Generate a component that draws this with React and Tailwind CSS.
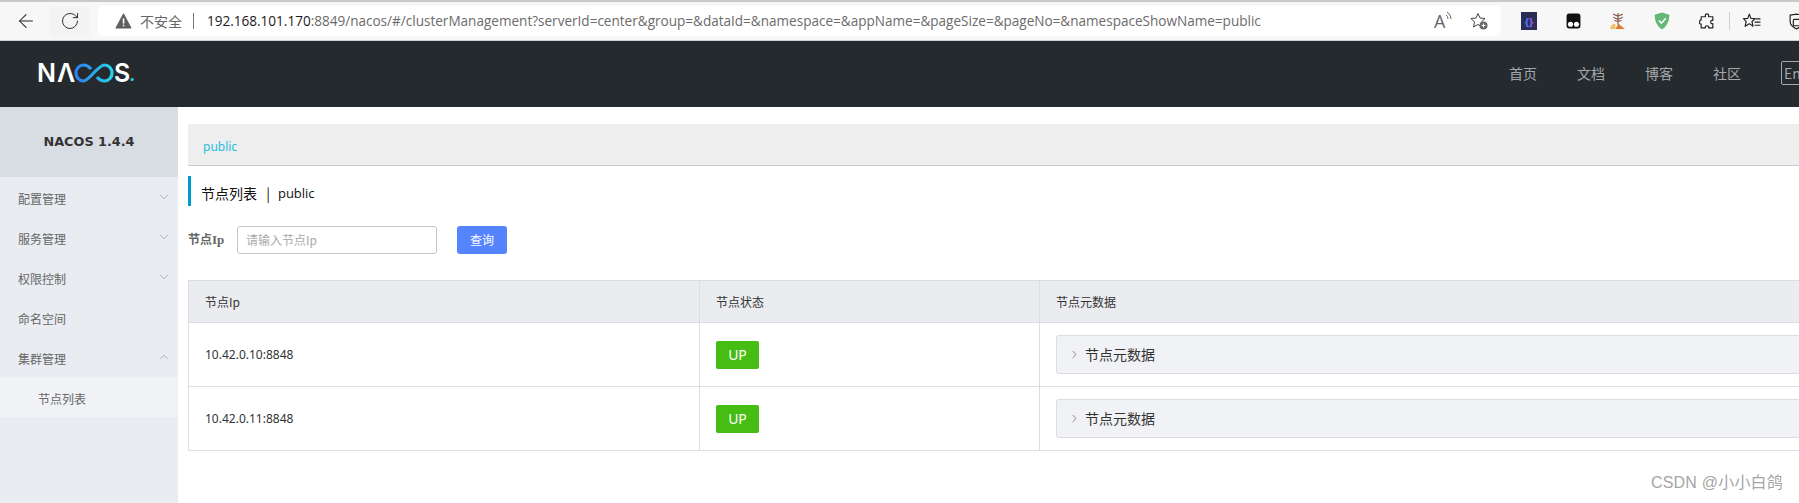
import React from "react";
import { ArrowLeft, RotateCw, ChevronDown, ChevronUp, ChevronRight } from "lucide-react";

const cjk = "font-['Noto_Sans_CJK_SC','Noto_Sans',sans-serif]";

function Logo() {
  return (
    <div className="flex items-center h-[20px] text-white font-['Inter',sans-serif] font-semibold text-[25px] leading-none">
      <span className="w-[20px]">N</span>
      <span className="w-[17px]">Λ</span>
      <svg width="40" height="20" viewBox="0 0 40 20" fill="none" strokeWidth="3.2">
        <defs>
          <linearGradient id="lg" x1="0" y1="0" x2="1" y2="0">
            <stop offset="0" stopColor="#2f7ff0" />
            <stop offset="1" stopColor="#27d3e8" />
          </linearGradient>
        </defs>
        <path d="M17 6 C14.500 3 12 2 9.500 2 C5 2 2 6 2 10 C2 14 5 18 9.500 18 C15 18 24 2 30.500 2 C35 2 38 6 38 10 C38 14 35 18 30.500 18 C27.500 18 25 16.500 23 14" stroke="url(#lg)" />
      </svg>
      <span className="w-[15px]">S</span>
      <span className="text-[#27c8e0] text-[20px] self-end leading-[18px]">.</span>
    </div>
  );
}

function Ext({ children }) {
  return <div className="w-[22px] h-[22px] flex items-center justify-center shrink-0">{children}</div>;
}

function Toolbar() {
  return (
    <div className="h-[41px] shrink-0 bg-[#f7f7f7] border-t-2 border-b border-t-[#c9c9c9] border-b-[#cfcfcf] flex items-center overflow-hidden font-['Open_Sans',sans-serif]">
      <div className="w-[50px] flex justify-center shrink-0 pl-[2px]">
        <ArrowLeft size={22} strokeWidth={1.1} color="#222" />
      </div>
      <div className="w-[40px] h-[30px] bg-[#f3f3f3] flex justify-center items-center shrink-0">
        <RotateCw size={20} strokeWidth={1.1} color="#222" />
      </div>
      <div className="ml-[8px] w-[1403px] h-[30px] bg-white rounded-[5px] flex items-center shrink-0">
        <svg width="17" height="16" viewBox="0 0 16 15" className="ml-[17px]">
          <path d="M8 1 L15 14 H1 Z" fill="#5f5f5f" stroke="#5f5f5f" strokeLinejoin="round" />
          <rect x="7.300" y="5" width="1.500" height="5" fill="#fff" />
          <rect x="7.300" y="11" width="1.500" height="1.500" fill="#fff" />
        </svg>
        <span className={`ml-[8px] text-[14px] text-[#666] ${cjk}`}>不安全</span>
        <span className="ml-[11px] w-px h-[16px] bg-[#777]" />
        <span className="ml-[13px] text-[13.55px] whitespace-nowrap text-[#6b6b6b] font-['Open_Sans',sans-serif]">
          <span className="text-[#1a1a1a]">192.168.101.170</span>:8849/nacos/#/clusterManagement?serverId=center&amp;group=&amp;dataId=&amp;namespace=&amp;appName=&amp;pageSize=&amp;pageNo=&amp;namespaceShowName=public
        </span>
        <div className="ml-auto flex items-center gap-[17px] pr-[13px]">
          <span className="flex items-start text-[#666] text-[18px] leading-none w-[19px] font-['Open_Sans',sans-serif]">
            A
            <svg width="7" height="10" viewBox="0 0 7 10" fill="none" stroke="#666" className="mt-[-1px]">
              <path d="M1 4 Q3 5 3 8 M2 1 Q6 3 6 8" />
            </svg>
          </span>
          <svg width="18" height="18" viewBox="0 0 18 18" fill="none">
            <path d="M8 1.500 L10 6 L15 6.500 L11.300 10 L12 15 L8 12.500 L3.500 15 L4.500 10 L1 6.500 L6 6 Z" stroke="#444" strokeLinejoin="round" />
            <circle cx="13.500" cy="13.500" r="4" fill="#666" />
            <path d="M11.500 13.500 H15.500 M13.500 11.500 V15.500" stroke="#fff" />
          </svg>
        </div>
      </div>
      <div className="ml-[17px] flex items-center gap-[22.4px] shrink-0">
        <Ext>
          <div className="w-[16px] h-[18px] bg-[#2b2d55] flex items-center justify-center text-[11px] leading-none font-bold">
            <span className="text-[#4f7dff]">{"{"}</span>
            <span className="text-[#9a5cf0]">{"}"}</span>
          </div>
        </Ext>
        <Ext>
          <svg width="15" height="16" viewBox="0 0 14 15">
            <path d="M3 0.500 H11 Q13.500 0.500 13.500 3 V12 Q13.500 14.500 11 14.500 H3 Q0.500 14.500 0.500 12 V3 Q0.500 0.500 3 0.500Z" fill="#111" />
            <circle cx="4.200" cy="10.500" r="2.400" fill="#fff" />
            <circle cx="9.800" cy="10.500" r="2.400" fill="#fff" />
          </svg>
        </Ext>
        <Ext>
          <svg width="16" height="18" viewBox="0 0 15 17">
            <path d="M0 16 Q1 11 5 11 L5 16 Z" fill="#edc060" />
            <path d="M5 16 L8 11 L14 16 Z" fill="#e07a30" />
            <path d="M7.500 12 V1 M7.500 4 L3 2 M7.500 4 L12 2 M7.500 7 L3 5 M7.500 7 L12 5 M7.500 9 L4 8 M7.500 9 L11 8" stroke="#8a5a50" strokeWidth="1.100" fill="none" />
          </svg>
        </Ext>
        <Ext>
          <svg width="16" height="18" viewBox="0 0 15 17">
            <path d="M7.500 0.500 L14.500 2.500 Q14.500 12 7.500 16.500 Q0.500 12 0.500 2.500 Z" fill="#63b777" />
            <path d="M4.500 8 L7 10.500 L11 6" stroke="#fff" strokeWidth="1.400" fill="none" />
          </svg>
        </Ext>
        <Ext>
          <svg width="16" height="17" viewBox="0 0 15 16" fill="none" stroke="#222" strokeWidth="1.100">
            <path d="M6 1.500 Q7.500 0 9 1.500 V3.500 H13 V7 Q11 6.500 11 8.500 Q11 10.500 13 10 V14 H9 Q9.500 12 7.500 12 Q5.500 12 6 14 H2 V10.500 Q0.200 10.500 0.500 8.500 Q0.500 6.500 2 6.500 V3.500 H6 Z" strokeLinejoin="round" />
          </svg>
        </Ext>
        <div className="w-px h-[18px] bg-[#d0d0d0] mx-[-11px]" />
        <Ext>
          <svg width="18" height="16" viewBox="0 0 17 15" fill="none" stroke="#222" strokeWidth="1.100">
            <path d="M6 1 L7.500 5 L11.500 5.300 L8.500 8 L9.500 12.500 L6 10 L2 12.500 L3 8 L0.500 5.300 L4.500 5 Z" strokeLinejoin="round" />
            <path d="M12 5.500 H16.500 M11 8.500 H16.500 M11 11.500 H16.500" />
          </svg>
        </Ext>
        <Ext>
          <svg width="17" height="17" viewBox="0 0 16 16" fill="none" stroke="#222" strokeWidth="1.100">
            <path d="M2 2 L8 1 L14 2 V8 Q14 12 8 15 Q2 12 2 8 Z" />
            <rect x="5" y="6" width="7" height="6" rx="1" />
          </svg>
        </Ext>
      </div>
    </div>
  );
}

function Header() {
  return (
    <div className={`h-[66px] shrink-0 bg-[#252a2f] flex items-center overflow-hidden ${cjk}`}>
      <div className="ml-[37px] mt-[-2px]"><Logo /></div>
      <div className="ml-auto flex items-center text-[14px] leading-none text-[#a5a8aa] gap-[40px] mr-[-22px] mt-[-2px]">
        <span className="w-[28px] whitespace-nowrap">首页</span>
        <span className="w-[28px] whitespace-nowrap">文档</span>
        <span className="w-[28px] whitespace-nowrap">博客</span>
        <span className="w-[28px] whitespace-nowrap">社区</span>
        <span className="w-[40px] h-[24px] border border-[#a5a8aa] rounded-[2px] pl-[2px] flex items-center">En</span>
      </div>
    </div>
  );
}

function MenuItem({ label, chevron, sub }) {
  return (
    <div className={`h-[40px] flex items-center justify-between ${sub ? "bg-[#f1f2f6] pl-[38px]" : "pl-[18px]"} pr-[7px] text-[12px] text-[#666]`}>
      <span className="mt-[3px]">{label}</span>
      {chevron === "down" && <ChevronDown size={14} strokeWidth={1} color="#7d828c" />}
      {chevron === "up" && <ChevronUp size={14} strokeWidth={1} color="#7d828c" />}
    </div>
  );
}

function Sidebar() {
  return (
    <div className={`w-[178px] shrink-0 bg-[#e9ecf1] ${cjk}`}>
      <div className="h-[70px] bg-[#d8dce3] flex items-center justify-center font-['DejaVu_Sans',sans-serif] font-bold text-[12.8px] text-[#333]">
        NACOS 1.4.4
      </div>
      <MenuItem label="配置管理" chevron="down" />
      <MenuItem label="服务管理" chevron="down" />
      <MenuItem label="权限控制" chevron="down" />
      <MenuItem label="命名空间" />
      <MenuItem label="集群管理" chevron="up" />
      <MenuItem label="节点列表" sub />
    </div>
  );
}

function Row({ ip, last, height }) {
  return (
    <div className={`flex ${height} ${last ? "" : "border-b border-[#dcdde3]"}`}>
      <div className="w-[510px] shrink-0 flex items-center pl-[16px] text-[12px] text-[#333] font-['Noto_Sans',sans-serif]">{ip}</div>
      <div className="w-[340px] shrink-0 border-l border-[#dcdde3] flex items-center pl-[16px]">
        <div className="w-[43px] h-[28px] bg-[#46bd13] rounded-[2px] text-white text-[14px] flex items-center justify-center font-['Noto_Sans',sans-serif]">UP</div>
      </div>
      <div className="flex-1 border-l border-[#dcdde3] flex items-center pl-[16px]">
        <div className="w-full h-[39px] bg-[#f1f2f6] border-y border-l border-[#dcdde3] rounded-l-[3px] flex items-center text-[14px] text-[#333]">
          <ChevronRight size={13} strokeWidth={1.200} color="#555" className="ml-[11px]" />
          <span className="ml-[4px]">节点元数据</span>
        </div>
      </div>
    </div>
  );
}

function Content() {
  return (
    <div className={`flex-1 min-w-0 pl-[10px] pt-[17px] ${cjk}`}>
      <div className="h-[42px] bg-[#eeeeee] border-b border-[#c9c9cf] flex items-center pl-[15px] pt-[4px] text-[12px] text-[#1ec0dd] font-['Noto_Sans',sans-serif]">public</div>
      <div className="mt-[10px] h-[30px] border-l-[3px] border-[#0099cc] flex items-center pl-[10px] pt-[5px] text-[14px] text-[#111] whitespace-pre">
        节点列表 <span className="ml-[6px] mr-[8px]">|</span> <span className="text-[13px] font-['Open_Sans',sans-serif]">public</span>
      </div>
      <div className="mt-[20px] h-[28px] flex items-center">
        <span className="text-[12px] font-bold text-[#666] w-[49px]">节点<span className="font-['Liberation_Serif',serif] text-[13px]">Ip</span></span>
        <div className="w-[200px] h-[28px] border border-[#c4c6cf] rounded-[3px] bg-white flex items-center pl-[8px] text-[12px] text-[#aaaaaa]">请输入节点Ip</div>
        <div className="ml-[20px] w-[50px] h-[28px] bg-[#5584ff] rounded-[3px] text-white text-[12px] flex items-center justify-center">查询</div>
      </div>
      <div className="mt-[26px] border-t border-b border-l border-[#dcdde3]">
        <div className="flex h-[42px] bg-[#ebecf0] border-b border-[#dcdde3] text-[12px] text-[#333]">
          <div className="w-[510px] shrink-0 flex items-center pl-[16px]">节点Ip</div>
          <div className="w-[340px] shrink-0 border-l border-[#dcdde3] flex items-center pl-[16px]">节点状态</div>
          <div className="flex-1 border-l border-[#dcdde3] flex items-center pl-[16px]">节点元数据</div>
        </div>
        <Row ip="10.42.0.10:8848" height="h-[64px]" />
        <Row ip="10.42.0.11:8848" height="h-[63px]" last />
      </div>
    </div>
  );
}

export default function App() {
  return (
    <div className="relative w-[1799px] h-[503px] overflow-hidden bg-white flex flex-col">
      <Toolbar />
      <Header />
      <div className="flex flex-1 min-h-0">
        <Sidebar />
        <Content />
      </div>
      <div className="absolute right-[16px] bottom-[10px] text-[16px] leading-[20px] tracking-[0.2px] text-[#a5a5a5] font-['Liberation_Sans','Noto_Sans_CJK_SC',sans-serif]">CSDN @小小白鸽</div>
    </div>
  );
}
